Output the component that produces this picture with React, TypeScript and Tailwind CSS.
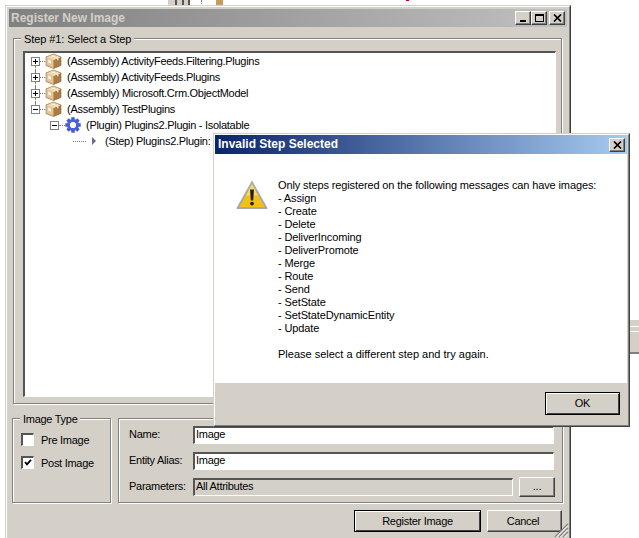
import React from "react";

const raised = "border border-t-white border-l-white border-r-[#404040] border-b-[#404040] shadow-[inset_-1px_-1px_0_#808080]";
const etched = "border border-[#808080] shadow-[1px_1px_0_#fff,inset_1px_1px_0_#fff]";
const sunken = "border-t-2 border-l-2 border-t-[#555] border-l-[#555] border-r border-b border-r-white border-b-white";

function Cube() {
  return (
    <svg width="17" height="16" viewBox="0 0 17 16" className="shrink-0">
      <path d="M8.5 1 16 4v8.5L8.5 15.5 1 12.5V4z" fill="#d7b27a" />
      <path d="M1 4l7.5 3v8.5L1 12.5z" fill="#e3c698" />
      <path d="M8.5 7 16 4v8.5l-7.5 3z" fill="#a97b45" />
      <path d="M8.5 1 16 4 8.5 7 1 4z" fill="#f0d9ae" />
      <path d="M3 6.5l3 1.2v3L3 9.5z" fill="#f7efe0" />
      <path d="M4.5 2.6 12 5.6v2l1.5-.6v-2L6 2z" fill="#fff3dc" opacity=".8" />
      <path d="M8.5 1 16 4v8.5L8.5 15.5 1 12.5V4z" fill="none" stroke="#8a6a3c" strokeWidth=".6" />
    </svg>
  );
}

function Gear() {
  return (
    <svg width="16" height="16" viewBox="0 0 16 16" className="shrink-0">
      {[0, 45, 90, 135, 180, 225, 270, 315].map((a) => (
        <rect key={a} x="6.3" y="0.3" width="3.4" height="4" fill="#4456c8" transform={`rotate(${a} 8 8)`} />
      ))}
      <circle cx="8" cy="8" r="4.6" fill="none" stroke="#4a62d4" strokeWidth="3" />
      <circle cx="8" cy="8" r="2.4" fill="#fff" />
    </svg>
  );
}

function Warning() {
  return (
    <svg width="32" height="30" viewBox="0 0 32 30">
      <path d="M16 0.5 31.5 28a.8.8 0 0 1-.7 1H1.2a.8.8 0 0 1-.7-1z" fill="#a9a9a9" />
      <path d="M16 4 28.5 27H3.5z" fill="#f3c20c" />
      <path d="M16 4 22 15.5H10z" fill="#fbe68a" opacity=".7" />
      <path d="M14 9.5h4l-.8 11h-2.4z" fill="#222" />
      <circle cx="16" cy="23.6" r="1.9" fill="#222" />
    </svg>
  );
}

function Toggle({ open, up, down }: { open?: boolean; up?: boolean; down?: boolean }) {
  return (
    <span className="relative w-[9px] h-[9px] shrink-0 border border-[#808080] bg-white flex items-center justify-center">
      {up && <span className="absolute left-[3px] top-[-5px] h-[4px] border-l border-dotted border-[#808080]" />}
      {down && <span className="absolute left-[3px] top-[8px] h-[8px] border-l border-dotted border-[#808080]" />}
      <span className="absolute left-[1px] top-[3px] w-[5px] h-px bg-black" />
      {!open && <span className="absolute left-[3px] top-[1px] w-px h-[5px] bg-black" />}
    </span>
  );
}

const Dots = ({ w }: { w: string }) => <span className={`${w} shrink-0 border-t border-dotted border-[#808080]`} />;

function Row({ pad, children }: { pad: string; children: React.ReactNode }) {
  return <div className={`flex items-center h-[16px] whitespace-nowrap ${pad}`}>{children}</div>;
}

function Cap({ children, className = "" }: { children: React.ReactNode; className?: string }) {
  return (
    <button className={`${raised} w-[16px] h-[14px] bg-[#d4d0c8] flex items-center justify-center shrink-0 ${className}`}>
      {children}
    </button>
  );
}

const CloseX = () => (
  <svg width="9" height="8" viewBox="0 0 9 8">
    <path d="M1 0.5 8 7.5M8 0.5 1 7.5" stroke="#000" strokeWidth="1.7" fill="none" />
  </svg>
);

const messages = [
  "Only steps registered on the following messages can have images:",
  "- Assign",
  "- Create",
  "- Delete",
  "- DeliverIncoming",
  "- DeliverPromote",
  "- Merge",
  "- Route",
  "- Send",
  "- SetState",
  "- SetStateDynamicEntity",
  "- Update",
];

export default function App() {
  return (
    <div className="relative w-[639px] h-[538px] overflow-hidden bg-white text-[11px] leading-[13px] tracking-[-0.28px] text-black font-['Liberation_Sans',sans-serif]">
      {/* window peeking out behind */}
      <div className="absolute left-[168px] top-0 w-[22px] h-[5px] flex">
        <span className="w-[7px] bg-[#d4d0c8]" />
        <span className="w-[2px] bg-[#555]" />
        <span className="w-[5px] bg-[#d4d0c8]" />
        <span className="w-[2px] bg-[#555]" />
        <span className="w-[4px] bg-[#d4d0c8]" />
        <span className="w-[2px] bg-[#555]" />
      </div>
      <span className="absolute left-[201px] top-0 w-px h-[4px] border-l border-dotted border-[#808080]" />
      <span className="absolute left-[216px] top-0 w-[7px] h-[5px] bg-[#c89a5c]" />
      <span className="absolute left-[406px] top-0 w-[3px] h-[1px] bg-[#c00000]" />
      <div className="absolute left-[629px] top-[320px] w-[10px] h-[34px] bg-[#d4d0c8] border-b-2 border-[#808080]">
        <div className="mt-[6px] h-[6px] border-y border-white" />
      </div>

      {/* main window */}
      <div className="absolute left-[5px] top-[5px] w-[566px] h-[540px] bg-[#d4d0c8] border border-[#d4d0c8] border-r-[#404040]">
        <div className="h-full border-l border-t border-white border-r border-r-[#808080] px-[2px] pt-[2px] flex flex-col">
          <div className="h-[18px] flex items-center pl-[2px] pr-[2px] bg-[linear-gradient(90deg,#808080,#c0c0c0)]">
            <span className="font-bold text-[12px] tracking-normal text-[#d4d0c8] grow whitespace-nowrap">Register New Image</span>
            <Cap>
              <span className="block w-[6px] h-[2px] bg-black mt-[6px]" />
            </Cap>
            <Cap>
              <span className="block w-[9px] h-[8px] border border-t-2 border-black" />
            </Cap>
            <Cap className="ml-[2px]">
              <CloseX />
            </Cap>
          </div>

          {/* Step group */}
          <div className={`relative mt-[11px] ml-[4px] w-[549px] h-[366px] ${etched} pt-[12px] pl-[9px]`}>
            <span className="absolute left-[7px] top-[-6px] px-[3px] bg-[#d4d0c8] tracking-[-0.1px] whitespace-nowrap">Step #1: Select a Step</span>
            <div className={`relative w-[533px] h-[346px] bg-white ${sunken} pl-[6px] overflow-hidden`}>
              <Row pad="pl-0">
                <Toggle down /><Dots w="w-[5px]" /><Cube /><span className="ml-[5px]">(Assembly) ActivityFeeds.Filtering.Plugins</span>
              </Row>
              <Row pad="pl-0">
                <Toggle up down /><Dots w="w-[5px]" /><Cube /><span className="ml-[5px]">(Assembly) ActivityFeeds.Plugins</span>
              </Row>
              <Row pad="pl-0">
                <Toggle up down /><Dots w="w-[5px]" /><Cube /><span className="ml-[5px]">(Assembly) Microsoft.Crm.ObjectModel</span>
              </Row>
              <Row pad="pl-0">
                <Toggle open up /><Dots w="w-[5px]" /><Cube /><span className="ml-[5px]">(Assembly) TestPlugins</span>
              </Row>
              <Row pad="pl-[19px]">
                <Toggle open /><Dots w="w-[6px]" /><Gear /><span className="ml-[5px]">(Plugin) Plugins2.Plugin - Isolatable</span>
              </Row>
              <Row pad="pl-[42px]">
                <Dots w="w-[13px]" />
                <svg width="6" height="8" viewBox="0 0 6 8" className="ml-[5px] shrink-0"><path d="M1 0 5 4 1 8z" fill="#6a6a8a" /></svg>
                <span className="ml-[8px]">(Step) Plugins2.Plugin:</span>
              </Row>
            </div>
          </div>

          {/* Lower groups */}
          <div className="flex mt-[14px] ml-[3px]">
            <div className={`relative w-[99px] h-[85px] ${etched} pl-[8px] pt-[14px] flex flex-col gap-[11px]`}>
              <span className="absolute left-[7px] top-[-6px] px-[3px] bg-[#d4d0c8] whitespace-nowrap">Image Type</span>
              <label className="flex items-center h-[12px]">
                <span className={`w-[13px] h-[13px] bg-white ${sunken} shrink-0`} />
                <span className="ml-[7px] mt-[2px] whitespace-nowrap">Pre Image</span>
              </label>
              <label className="flex items-center h-[12px]">
                <span className={`w-[13px] h-[13px] bg-white ${sunken} shrink-0 flex items-center justify-center`}>
                  <svg width="8" height="7" viewBox="0 0 8 7"><path d="M1 3l2 2.4L7 .8" stroke="#000" strokeWidth="1.8" fill="none" /></svg>
                </span>
                <span className="ml-[7px] mt-[2px] whitespace-nowrap">Post Image</span>
              </label>
            </div>
            <div className={`ml-[7px] w-[445px] h-[85px] ${etched} pl-[10px] pt-[7px] flex flex-col gap-[8px]`}>
              <div className="flex items-center h-[18px]">
                <span className="w-[64px] mb-[2px] whitespace-nowrap">Name:</span>
                <span className={`w-[361px] h-[18px] bg-white ${sunken} pl-px pb-[2px] flex items-center`}>Image</span>
              </div>
              <div className="flex items-center h-[18px]">
                <span className="w-[64px] mb-[2px] whitespace-nowrap">Entity Alias:</span>
                <span className={`w-[361px] h-[18px] bg-white ${sunken} pl-px pb-[2px] flex items-center`}>Image</span>
              </div>
              <div className="flex items-center h-[18px]">
                <span className="w-[64px] mb-[2px] whitespace-nowrap">Parameters:</span>
                <span className={`w-[320px] h-[18px] ${sunken} pl-px pb-[2px] flex items-center`}>All Attributes</span>
                <button className={`${raised} ml-[6px] w-[36px] h-[20px] pb-[2px] bg-[#d4d0c8]`}>...</button>
              </div>
            </div>
          </div>

          {/* Buttons */}
          <div className="flex mt-[7px] ml-[345px]">
            <button className="w-[127px] h-[22px] pt-[1px] bg-[#d4d0c8] border border-black shadow-[inset_1px_1px_0_#fff,inset_-1px_-1px_0_#404040]">Register Image</button>
            <button className={`${raised} ml-[6px] w-[75px] h-[22px] pt-[1px] pr-[3px] bg-[#d4d0c8]`}>Cancel</button>
          </div>
        </div>
      </div>

      {/* size grip */}
      <svg width="15" height="15" viewBox="0 0 15 15" className="absolute left-[554px] top-[523px]">
        {[0, 4, 8].map((o) => (
          <g key={o}>
            <path d={`M${14} ${o + 1}L${o + 1} 14`} stroke="#808080" strokeWidth="1.4" />
            <path d={`M${14} ${o + 2.5}L${o + 2.5} 14`} stroke="#fff" strokeWidth="1" />
          </g>
        ))}
      </svg>

      {/* alert dialog */}
      <div className="absolute left-[213px] top-[133px] w-[417px] h-[294px] bg-[#d4d0c8] border border-[#d4d0c8] border-r-[#404040] border-b-[#404040]">
        <div className="h-full border-l border-t border-white border-r border-b border-r-[#808080] border-b-[#808080] flex flex-col pr-px">
          <div className="h-[19px] flex items-center pl-[3px] pr-[2px] bg-[linear-gradient(90deg,#0a246a,#a6caf0)]">
            <span className="font-bold text-[12px] tracking-normal text-white grow whitespace-nowrap">Invalid Step Selected</span>
            <Cap><CloseX /></Cap>
          </div>
          <div className="h-[229px] bg-white flex pl-[21px] pt-[25px]">
            <div className="shrink-0 pt-[1px]"><Warning /></div>
            <div className="ml-[10px] whitespace-nowrap tracking-[-0.12px]">
              {messages.map((m) => <div key={m}>{m}</div>)}
              <div className="mt-[13px] tracking-normal">Please select a different step and try again.</div>
            </div>
          </div>
          <div className="flex justify-end pt-[9px] pr-[7px]">
            <button className="w-[75px] h-[23px] bg-[#d4d0c8] border border-black shadow-[inset_1px_1px_0_#fff,inset_-1px_-1px_0_#404040]">OK</button>
          </div>
        </div>
      </div>
    </div>
  );
}
